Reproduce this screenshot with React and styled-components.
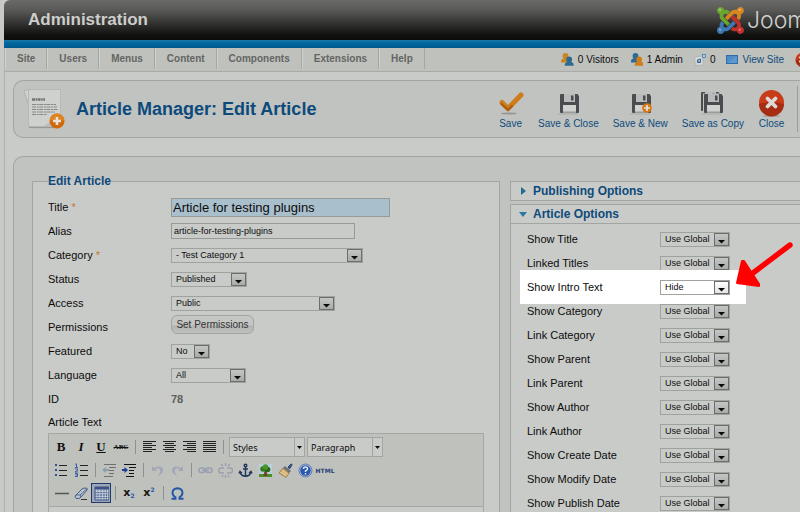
import React from "react";
import styled, { createGlobalStyle } from "styled-components";

const Global = createGlobalStyle`
  *, *::before, *::after { box-sizing: border-box; }
  html { scrollbar-width: none; background: #c8cac7; }
  body { margin: 0; font-family: "Liberation Sans", Arial, sans-serif; font-size: 11px; color: #0c0c0c; }
  button, input, select { font-family: inherit; color: inherit; margin: 0; }
`;

const line = "#a3a5a2";
const panel = "#c1c3c0";
const page = "#c9cbc8";
const navy = "#0d4a7c";

const Shell = styled.div`
  min-height: 100vh;
  margin-left: 4px;
  display: flex;
  flex-direction: column;
  overflow-x: clip;
`;

const Header = styled.header`
  height: 40px;
  flex: none;
  display: flex;
  align-items: center;
  justify-content: space-between;
  padding-left: 24px;
  border-top-left-radius: 6px;
  background: linear-gradient(#6a6a68, #595957 25%, #10100f 88%, #0c0c0c);
`;

const SiteName = styled.span`
  font-size: 17px;
  font-weight: bold;
  line-height: 20px;
  color: #cdcecb;
`;

const Brand = styled.a`
  display: flex;
  align-items: center;
  gap: 3px;
  width: 83px;
  overflow: hidden;
  color: #cfd0ce;
  text-decoration: none;
  font-family: Inter, "Liberation Sans", sans-serif;
  font-weight: 300;
  font-size: 23px;
  line-height: 28px;
  white-space: nowrap;
  svg { flex: none; }
`;

const Strip = styled.div`
  height: 8px;
  flex: none;
  background: linear-gradient(#1a7aa8, #0068a0 35%, #00588a);
`;

const Body = styled.div`
  flex: 1;
  display: flex;
  flex-direction: column;
  border-left: 1px solid #afb1ae;
  background: ${page};
`;

const NavBar = styled.div`
  height: 24px;
  flex: none;
  display: flex;
  justify-content: space-between;
  border-bottom: 1px solid #a9aba8;
  background: #bfc1bd;
`;

const Menu = styled.nav`
  display: flex;
  height: 21px;
`;

const MenuLink = styled.a`
  display: flex;
  align-items: center;
  padding: 0 11px;
  border-right: 1px solid #a5a7a4;
  border-left: 1px solid #cfd1ce;
  font-size: 10px;
  font-weight: bold;
  color: #646563;
  text-decoration: none;
`;

const Status = styled.div`
  display: flex;
  align-items: center;
  gap: 11px;
`;

const StatusItem = styled.span`
  display: flex;
  align-items: center;
  gap: 4px;
  font-size: 10px;
  white-space: nowrap;
`;

const StatusLink = styled(StatusItem).attrs({ as: "a", href: "#" })`
  color: ${navy};
  text-decoration: none;
`;

const Logout = styled.a`
  width: 5px;
  height: 14px;
  overflow: hidden;
`;

const TitleBar = styled.section`
  flex: none;
  display: flex;
  align-items: center;
  justify-content: space-between;
  height: 58px;
  margin: 8px 0 18px 8px;
  padding-left: 8px;
  border: 1px solid ${line};
  border-right: 0;
  border-radius: 10px 0 0 10px;
  background: ${panel};
`;

const Heading = styled.h1`
  display: flex;
  align-items: center;
  gap: 10px;
  margin: 0;
  font-size: 18px;
  line-height: 24px;
  color: ${navy};
  white-space: nowrap;
`;

const Actions = styled.div`
  display: flex;
  gap: 14px;
  height: 46px;
  padding-right: 12px;
  margin-right: 2px;
  border-right: 1px solid #9a9c99;
`;

const Action = styled.button`
  display: flex;
  flex-direction: column;
  align-items: center;
  gap: 1px;
  padding: 4px 0 0;
  border: 0;
  background: none;
  font-size: 10px;
  line-height: 12px;
  color: ${navy};
  white-space: nowrap;
`;

const Workspace = styled.main`
  flex: 1;
  display: grid;
  grid-template-columns: minmax(0, 468fr) minmax(0, 290fr);
  gap: 10px;
  margin-left: 8px;
  padding: 17px 0 0 18px;
  border: solid ${line};
  border-width: 1px 0 0 1px;
  border-top-left-radius: 10px;
  background: ${panel};
`;

const Fieldset = styled.fieldset`
  display: flex;
  flex-direction: column;
  min-width: 0;
  margin: 0;
  padding: 7px 15px 0;
  border: 1px solid ${line};
  border-bottom: 0;
  background: ${page};
`;

const Legend = styled.legend`
  padding: 0;
  font-size: 12px;
  font-weight: bold;
  line-height: 14px;
  color: ${navy};
`;

const Field = styled.div`
  display: grid;
  grid-template-columns: 123px minmax(0, 1fr);
  align-items: center;
  justify-items: start;
  height: 24px;
`;

const Label = styled.label`
  font-size: 11px;
  line-height: 14px;
`;

const Star = styled.span`
  color: #c67a35;
`;

const TextInput = styled.input`
  width: 184px;
  max-width: 100%;
  height: 16px;
  padding: 0 2px;
  border: 1px solid #989a97;
  border-radius: 0;
  background: transparent;
  font-size: 9px;
`;

const TitleInput = styled(TextInput)`
  width: 219px;
  height: 19px;
  padding: 0 1px;
  background: #a9bfcc;
  font-size: 13px;
`;

const SelectBox = styled.span`
  display: inline-grid;
  grid-template-columns: minmax(0, 1fr) 15px;
  width: ${(p) => p.$w}px;
  max-width: 100%;
  height: 15px;
  border: 1px solid #a0a29f;
  background: ${(p) => (p.$lit ? "#fff" : "transparent")};
  select {
    grid-area: 1 / 1 / 2 / 3;
    appearance: none;
    min-width: 0;
    height: 13px;
    padding: 0 0 0 4px;
    border: 0;
    background: none;
    font-size: 9px;
    line-height: 13px;
  }
  svg {
    grid-area: 1 / 2 / 2 / 3;
    width: 15px;
    height: 13px;
    pointer-events: none;
    border: 1px solid #6c6e6b;
    background: ${(p) => (p.$lit ? "linear-gradient(#fff, #e4e4e4)" : "linear-gradient(#c4c6c3, #a9aba8)")};
  }
`;

const PlainButton = styled.button`
  align-self: start;
  width: 83px;
  height: 19px;
  padding: 0;
  border: 1px solid #a2a4a1;
  border-radius: 6px;
  background: linear-gradient(#c5c7c4 50%, #b3b5b2 60%, #bfc1be);
  font-size: 10px;
  color: #333;
`;

const IdValue = styled.output`
  font-weight: bold;
  color: #5c5e5b;
`;

const TextLabel = styled(Label)`
  height: 22px;
  line-height: 22px;
`;

const Editor = styled.div`
  flex: 1;
  min-height: 78px;
  border: 1px solid #a6a8a4;
  border-bottom: 0;
`;

const Toolbars = styled.div`
  padding: 2px;
  border-bottom: 1px solid #a6a8a4;
  background: #bfc1bc;
`;

const ToolRow = styled.div`
  display: flex;
  align-items: center;
  height: 22px;
  & + & { margin-top: 1px; }
`;

const Tool = styled.button`
  flex: none;
  display: flex;
  align-items: center;
  justify-content: center;
  width: 20px;
  height: 20px;
  padding: 0;
  border: 1px solid ${(p) => (p["aria-pressed"] ? "#23386b" : "transparent")};
  background: ${(p) => (p["aria-pressed"] ? "#9aa5b8" : "none")};
`;

const Glyph = styled.span`
  font-family: "Liberation Serif", serif;
  font-size: ${(p) => p.$size || 13}px;
  font-weight: bold;
  font-style: ${(p) => (p.$italic ? "italic" : "normal")};
  text-decoration: ${(p) => p.$deco || "none"};
  color: #111;
`;

const HtmlGlyph = styled.span`
  font-family: "DejaVu Sans", sans-serif;
  font-size: 6px;
  font-weight: bold;
  color: #1e3f74;
`;

const Sep = styled.span`
  flex: none;
  width: 1px;
  height: 14px;
  margin: 0 3px 0 4px;
  background: #8f918e;
`;

const EditorSelect = styled.span`
  flex: none;
  display: inline-grid;
  grid-template-columns: 1fr 10px;
  width: 76px;
  height: 20px;
  margin-left: 2px;
  border: 1px solid #a3a5a2;
  background: #c9cbc8;
  select {
    grid-area: 1 / 1 / 2 / 3;
    appearance: none;
    min-width: 0;
    padding: 0 0 0 3px;
    border: 0;
    background: none;
    font-family: "Noto Sans", "DejaVu Sans", sans-serif;
    font-size: 9px;
  }
  svg {
    grid-area: 1 / 2 / 2 / 3;
    width: 10px;
    height: 18px;
    border-left: 1px solid #a3a5a2;
    pointer-events: none;
  }
`;

const Sliders = styled.div`
  display: flex;
  flex-direction: column;
  gap: 3px;
  margin-top: 7px;
`;

const Slider = styled.section`
  flex: ${(p) => (p.$open ? 1 : "none")};
  border: 1px solid ${line};
  border-width: ${(p) => (p.$open ? "1px 0 0 1px" : "1px 0 1px 1px")};
  background: ${page};
`;

const SliderTitle = styled.h3`
  margin: 0;
  border-bottom: ${(p) => (p.$open ? `1px solid ${line}` : "0")};
`;

const SliderToggle = styled.button`
  display: flex;
  align-items: center;
  gap: 6px;
  width: 100%;
  height: 18px;
  padding: 0 0 0 8px;
  border: 0;
  background: none;
  font-size: 12px;
  font-weight: bold;
  color: ${navy};
`;

const Options = styled.div`
  padding: 3px 0 0 9px;
`;

const OptionRow = styled.div`
  position: relative;
  display: grid;
  grid-template-columns: 133px minmax(0, 1fr);
  align-items: center;
  max-width: 226px;
  height: ${(p) => (p.$lit ? 34 : 24)}px;
  margin: ${(p) => (p.$lit ? "-5px 0" : "0")};
  padding-left: 7px;
  background: ${(p) => (p.$lit ? "#fff" : "none")};
`;

const Pointer = styled.svg`
  position: absolute;
  left: 215px;
  top: -28px;
  z-index: 1;
`;

function JoomlaMark() {
  return (
    <svg width="27" height="31" viewBox="0 0 448 512" aria-hidden="true">
      <path fill="#6aa52c" d="M.6 92.1C.6 58.8 27.4 32 60.4 32c30 0 54.5 21.9 59.2 50.2 32.6-7.6 67.1.6 96.5 30l-44.3 44.3c-20.5-20.5-42.6-16.3-55.4-3.5-14.3 14.3-14.3 37.9 0 52.2l99.5 99.5-44 44.3c-87.7-87.2-49.7-49.7-99.8-99.7-26.8-26.5-35-64.8-24.8-98.9C20.4 144.6.6 120.7.6 92.1z" />
      <path fill="#d78620" d="M130.1 208.5l44.3 44.3c10-10 89.7-89.7 99.7-99.8 14.3-14.3 37.6-14.3 51.9 0 12.8 12.8 17 35-3.5 55.4l44 44.3c31.2-31.2 38.5-67.6 28.9-101.2 29.2-4.1 51.9-29.2 51.9-59.5 0-33.2-26.8-60.1-59.8-60.1-30.3 0-55.4 22.5-59.5 51.6-33.8-9.9-71.7-1.5-98.3 25.1-18.3 19.1-71.1 71.5-99.6 99.9z" />
      <path fill="#c4312d" d="M396.4 360.7c8.2-32.7-.9-68.5-26.3-93.9-11.8-12.2 5 4.7-99.5-99.7l-44.3 44.3 99.7 99.7c14.3 14.3 14.3 37.6 0 51.9-12.8 12.8-35 17-55.4-3.5l-44 44.3c27.6 30.2 68 38.8 102.7 28 5.5 27.4 29.7 48.1 58.9 48.1 33 0 59.8-26.8 59.8-60.1 0-30.2-22.5-55-51.6-59.1z" />
      <path fill="#3f79b5" d="M312.1 307.6l-44-44.3c-87 86.4-50.4 50.4-99.7 99.8-14.3 14.3-37.6 14.3-51.9 0-13.1-13.4-16.9-35.3 3.2-55.4l-44-44.3c-30.2 30.2-38 65.2-29.5 98.3-26.7 6-46.2 29.9-46.2 58.2C0 453.2 26.8 480 59.8 480c28.6 0 52.5-19.8 58.6-46.7 32.7 8.2 68.5-.6 94.2-26 32.1-32 12.2-12.4 99.5-99.7z" />
      <g fill="#fff" opacity=".35">
        <circle cx="50" cy="78" r="22" /><circle cx="378" cy="78" r="22" />
        <circle cx="50" cy="408" r="20" /><circle cx="378" cy="408" r="20" />
      </g>
    </svg>
  );
}

function People({ back, front, flip }) {
  return (
    <svg width="13" height="13" viewBox="0 0 13 13" aria-hidden="true">
      <g transform={flip ? "translate(1 0)" : undefined}>
        <path d="M0 9.500C-.2 6.500 1 5.300 4.300 5.300s4.500 1 4.500 4.200z" fill={back} />
        <circle cx="4.500" cy="3" r="2.900" fill={back} />
        <path d="M3.700 12.700C3.500 9.700 5 8.700 8.200 8.700s4.700 1 4.500 4z" fill={front} />
        <circle cx="8.200" cy="6.500" r="2.900" fill={front} />
      </g>
    </svg>
  );
}

function MailIcon() {
  return (
    <svg width="12" height="12" viewBox="0 0 12 12" aria-hidden="true">
      <path d="M.5 3l8-1 1 9-8 .5z" fill="#d3d6d8" stroke="#a8adb0" strokeWidth=".7" />
      <path d="M3.500 8.500V6l3-1v3.500zM3.500 6.500l2 1" fill="none" stroke="#35668f" />
      <rect x="8.500" y=".5" width="3" height="3" fill="#b4cbe0" stroke="#4b7eae" strokeWidth=".8" />
    </svg>
  );
}

function ScreenIcon() {
  return (
    <svg width="12" height="9" viewBox="0 0 12 9" aria-hidden="true">
      <rect x=".5" y=".5" width="11" height="8" fill="#4d8bc9" stroke="#2f6ba6" />
      <path d="M1 8L11 1v7z" fill="#5f98d0" />
    </svg>
  );
}

function ArticleIcon() {
  return (
    <svg width="44" height="44" viewBox="0 0 44 44" aria-hidden="true">
      <path d="M2 4l6-2v20z" fill="#d0d2cf" stroke="#a5a7a4" strokeWidth=".7" />
      <rect x="6.500" y="2.500" width="32" height="37" fill="#cfd1ce" stroke="#b7b9b6" />
      <path d="M7 40h31L38 28 22 39z" fill="#bbbdba" />
      <path d="M10 12.500h13" stroke="#737572" strokeWidth="2.400" strokeDasharray="3 .6 1.500 .5" />
      <path d="M10 17.500h24M10 20h25M10 22.500h26M10 25h23M10 27.500h15" stroke="#868885" strokeWidth="1" strokeDasharray="4 .7 2 .5" />
      <path d="M7 40.500h30" stroke="#979996" strokeWidth="1.200" />
      <circle cx="35" cy="34" r="7.500" fill="#d06a0c" />
      <path d="M27.500 34a7.500 7.500 0 0 1 15 0q-7-3-15 0z" fill="#dc8420" />
      <path d="M35 30v8M31 34h8" stroke="#e6e3dd" strokeWidth="2.600" />
    </svg>
  );
}

function SaveTick() {
  return (
    <svg width="27" height="27" viewBox="0 0 27 27" aria-hidden="true">
      <ellipse cx="12" cy="23.500" rx="8" ry="1" fill="#969895" />
      <path d="M5 12.500l6 6L24 5" fill="none" stroke="#cf7c1c" strokeWidth="5" strokeLinecap="round" strokeLinejoin="round" />
      <path d="M4.500 14l6.500 6 4-4" fill="none" stroke="#a85d12" strokeWidth="2.200" strokeLinecap="round" />
    </svg>
  );
}

function Disk() {
  return (
    <>
      <path d="M0 1q0-1 1-1h16.500L19 2v16q0 1-1 1H1q-1 0-1-1z" fill="#4b4c50" />
      <path d="M4 0h11v8H4z" fill="#b9bbbb" />
      <path d="M11 1.500h2.500v5H11z" fill="#4b4c50" />
      <path d="M3 11h13v8H3z" fill="#d0d2d0" />
      <path d="M3 17.500h13V19H3z" fill="#999b9a" />
    </>
  );
}

function DiskIcon({ plus, copy }) {
  return (
    <svg width="27" height="27" viewBox="0 0 27 27" aria-hidden="true">
      <path d="M3 24h20" stroke="#a7a9a6" />
      {copy && <g transform="translate(2 2)"><Disk /></g>}
      {copy && <path d="M4 3.500h20v19H4z" fill="#c1c3c0" />}
      <g transform="translate(5 4)"><Disk /></g>
      {plus && <circle cx="20" cy="18" r="4.800" fill="#d47714" />}
      {plus && <path d="M20 15v6M17 18h6" stroke="#e6e3dd" strokeWidth="1.700" />}
    </svg>
  );
}

function CloseIcon({ size = 27 }) {
  return (
    <svg width={size} height={size} viewBox="0 0 27 27" aria-hidden="true">
      <ellipse cx="13.500" cy="26" rx="9" ry="1" fill="#a2a4a1" />
      <circle cx="13.500" cy="12.500" r="12.500" fill="#c93c1a" />
      <path d="M1 14a12.500 12.500 0 0 0 25 0q-12-4-25 0z" fill="#a62d14" />
      <path d="M9.500 8.500l8 8m0-8l-8 8" stroke="#dcdad6" strokeWidth="3.800" strokeLinecap="round" />
    </svg>
  );
}

function Lines({ rows, color = "#222" }) {
  return <path d={rows.map(([x, y, w]) => `M${x} ${y}.5h${w}`).join("")} stroke={color} fill="none" />;
}

const alignRows = {
  left: [[1, 1, 13], [1, 3, 9], [1, 5, 13], [1, 7, 9], [1, 9, 13], [1, 11, 9]],
  center: [[1, 1, 13], [3, 3, 9], [1, 5, 13], [3, 7, 9], [1, 9, 13], [3, 11, 9]],
  right: [[1, 1, 13], [5, 3, 9], [1, 5, 13], [5, 7, 9], [1, 9, 13], [5, 11, 9]],
  full: [[1, 1, 13], [1, 3, 13], [1, 5, 13], [1, 7, 13], [1, 9, 13], [1, 11, 13]],
};

const drawings = {
  ...Object.fromEntries(Object.entries(alignRows).map(([k, rows]) => [k, <Lines rows={rows} />])),
  bullets: (
    <>
      <Lines rows={[[5, 2, 8], [5, 7, 8], [5, 12, 8]]} />
      <path d="M1 1h2v2H1zM1 6h2v2H1zM1 11h2v2H1z" fill="#2b55a0" />
    </>
  ),
  numbers: (
    <>
      <Lines rows={[[6, 2, 8], [6, 7, 8], [6, 12, 8]]} />
      <path d="M1 1h1.500v3M1 4.500h3M1 6h2.500v1.500L1 9h3M1 10.500h2.500v3H1M1.500 12h2" fill="none" stroke="#2b55a0" strokeWidth=".9" />
    </>
  ),
  outdent: (
    <g opacity=".5">
      <Lines rows={[[2, 1, 12], [7, 4, 7], [7, 7, 5], [7, 10, 5], [2, 13, 9]]} />
      <path d="M0 7l4-3v2h3v2H4v2z" fill="#5f79a4" />
    </g>
  ),
  indent: (
    <>
      <Lines rows={[[2, 1, 12], [7, 4, 7], [7, 7, 5], [7, 10, 5], [4, 13, 8]]} color="#111" />
      <path d="M6 7L2.500 4v2H0v2h2.500v2z" fill="#173f96" />
    </>
  ),
  undo: <path d="M2 3v5h5L5.500 6.500Q9 4 10 7T7 13Q14 11 13 6 11 1 4 5z" fill="#a2a8b8" />,
  redo: <path d="M13 3v5H8l1.500-1.500Q6 4 5 7t3 6Q1 11 2 6 4 1 11 5z" fill="#a2a8b8" />,
  link: (
    <g fill="none" stroke="#999faf" strokeWidth="1.500">
      <rect x="1" y="5" width="6" height="4.500" rx="2" /><rect x="8" y="5" width="6" height="4.500" rx="2" /><path d="M4 7.500h7" />
    </g>
  ),
  unlink: (
    <g fill="none" stroke="#999faf" strokeWidth="1.400">
      <path d="M6 5H3a2 2 0 0 0 0 5h3M9 5h3a2 2 0 0 1 0 5H9M7.500 0v3M3 1l2 2M12 1l-2 2M7.500 12v3M4 14l1-2M11 14l-1-2" />
    </g>
  ),
  anchor: (
    <g fill="none" stroke="#22395e" strokeWidth="1.500">
      <circle cx="7.500" cy="2.500" r="1.300" /><path d="M7.500 4v9M5 6h5M2 9q1 4 5.500 4.200Q12 13 13 9M1 10.500l1-2 2 1.500M11 10l2-1.500 1 2" />
    </g>
  ),
  image: (
    <>
      <path d="M1 1h13v13H1z" fill="#b8d0de" /><path d="M1 11h13v3H1z" fill="#4c8c2d" />
      <path d="M6.500 8h2l1 5h-4z" fill="#70431f" />
      <circle cx="5" cy="6" r="2.800" fill="#347a20" /><circle cx="9.500" cy="6.500" r="2.800" fill="#28671b" /><circle cx="7.500" cy="4" r="2.800" fill="#4a962d" />
    </>
  ),
  brush: (
    <>
      <path d="M10 4l3-3q1-.5 1 1l-2.500 4z" fill="#3c5a90" stroke="#2c4474" />
      <path d="M7 3l6 5-2 2-6-5z" fill="#6c727b" /><path d="M5 5l6 5-3 4.500L1 10z" fill="#d3b071" stroke="#8d6a35" strokeWidth=".7" />
      <path d="M3 9l5 4M4.500 7.500l5 4" stroke="#f0dcae" strokeWidth=".8" />
    </>
  ),
  help: (
    <>
      <circle cx="7.500" cy="7.500" r="6.500" fill="#a9bcda" /><circle cx="7.500" cy="7.500" r="5.200" fill="#2a58ae" />
      <circle cx="7.500" cy="7.500" r="6.500" fill="none" stroke="#4e6ea8" strokeWidth=".8" />
      <path d="M5.500 6q0-2 2-2t2 1.800Q9.500 7 7.500 8v1M7.500 10v1.500" fill="none" stroke="#e2e6ee" strokeWidth="1.500" />
    </>
  ),
  rule: <path d="M1 7.500h14" stroke="#555" strokeWidth="1.500" />,
  eraser: (
    <>
      <path d="M2 9l6-6q1-1 2.500-.8h2Q14 2.500 13 4l-6 7q-1 1.500-2.500 1.500H3Q0 12 2 9z" fill="#b8c4d4" stroke="#3f587d" />
      <path d="M2 9h4q1.500 1 .5 2.500M6 9l7-6.500" stroke="#3f587d" fill="none" strokeWidth=".8" /><path d="M7 13.500h6" stroke="#333" />
    </>
  ),
  table: (
    <>
      <path d="M1 1h14v13H1z" fill="#c5cedd" /><path d="M1 1h14v2.500H1z" fill="#3d5282" />
      <path d="M1 6.500h14M1 9h14M1 11.500h14M4 3v11M7 3v11M10 3v11M12.500 3v11" stroke="#4a5f8e" strokeWidth=".8" strokeDasharray="2 .6" />
      <path d="M1 1h14v13H1z" fill="none" stroke="#3d5282" />
    </>
  ),
  omega: <path d="M1.500 12.800h4v-1.500Q2.500 9.500 2.500 6.500 2.800 2.500 7.500 2.300q4.700.2 5 4.200 0 3-3 4.800v1.500h4" fill="none" stroke="#2455a6" strokeWidth="1.900" />,
};

function ToolIcon({ name, label, pressed }) {
  return (
    <Tool type="button" aria-label={label} aria-pressed={pressed}>
      <svg width="15" height="15" viewBox="0 0 15 15" aria-hidden="true">{drawings[name]}</svg>
    </Tool>
  );
}

const ScriptGlyph = styled.span`
  display: flex;
  align-items: ${(p) => (p.$low ? "flex-end" : "flex-start")};
  font-family: "DejaVu Sans", sans-serif;
  font-size: 11px;
  font-weight: bold;
  line-height: 12px;
  color: #151515;
  small { font-size: 6px; line-height: 6px; color: #2455a6; }
`;

function Select({ id, value, w, lit, label }) {
  return (
    <SelectBox $w={w} $lit={lit}>
      <select id={id} defaultValue={value} aria-label={label}>
        <option>{value}</option>
      </select>
      <svg viewBox="0 0 13 11" aria-hidden="true"><path d="M3 6h7L6.500 9.500z" fill="#080808" /></svg>
    </SelectBox>
  );
}

function ToolSelect({ value, label }) {
  return (
    <EditorSelect>
      <select defaultValue={value} aria-label={label}><option>{value}</option></select>
      <svg viewBox="0 0 9 18" aria-hidden="true"><path d="M2 8h5L4.500 11z" fill="#080808" /></svg>
    </EditorSelect>
  );
}

const menus = ["Site", "Users", "Menus", "Content", "Components", "Extensions", "Help"];

const actions = [
  ["Save", <SaveTick />],
  ["Save & Close", <DiskIcon />],
  ["Save & New", <DiskIcon plus />],
  ["Save as Copy", <DiskIcon copy />],
  ["Close", <CloseIcon />],
];

const options = [
  "Show Title", "Linked Titles", "Show Intro Text", "Show Category", "Link Category", "Show Parent",
  "Link Parent", "Show Author", "Link Author", "Show Create Date", "Show Modify Date", "Show Publish Date",
];

function Choice({ id, label, value, w, required }) {
  return (
    <Field>
      <Label htmlFor={id}>{label}{required && <Star> *</Star>}</Label>
      <Select id={id} value={value} w={w} />
    </Field>
  );
}

export default function App() {
  return (
    <>
      <Global />
      <Shell>
        <Header>
          <SiteName>Administration</SiteName>
          <Brand href="#"><JoomlaMark />Joomla!</Brand>
        </Header>
        <Strip />
        <Body>
          <NavBar>
            <Menu>{menus.map((m) => <MenuLink href="#" key={m}>{m}</MenuLink>)}</Menu>
            <Status>
              <StatusItem><People back="#c98424" front="#2d6a92" />0 Visitors</StatusItem>
              <StatusItem><People back="#2d6a92" front="#d17c16" flip />1 Admin</StatusItem>
              <StatusItem><MailIcon />0</StatusItem>
              <StatusLink><ScreenIcon />View Site</StatusLink>
              <Logout href="#" aria-label="Log out"><CloseIcon size={14} /></Logout>
            </Status>
          </NavBar>

          <TitleBar>
            <Heading><ArticleIcon />Article Manager: Edit Article</Heading>
            <Actions>
              {actions.map(([label, icon]) => (
                <Action type="button" key={label}>{icon}{label}</Action>
              ))}
            </Actions>
          </TitleBar>

          <Workspace>
            <Fieldset>
              <Legend>Edit Article</Legend>
              <Field>
                <Label htmlFor="title">Title<Star> *</Star></Label>
                <TitleInput id="title" defaultValue="Article for testing plugins" />
              </Field>
              <Field>
                <Label htmlFor="alias">Alias</Label>
                <TextInput id="alias" defaultValue="article-for-testing-plugins" />
              </Field>
              <Choice id="category" label="Category" value="- Test Category 1" w={192} required />
              <Choice id="status" label="Status" value="Published" w={76} />
              <Choice id="access" label="Access" value="Public" w={164} />
              <Field>
                <Label htmlFor="permissions">Permissions</Label>
                <PlainButton id="permissions" type="button">Set Permissions</PlainButton>
              </Field>
              <Choice id="featured" label="Featured" value="No" w={39} />
              <Choice id="language" label="Language" value="All" w={75} />
              <Field>
                <Label htmlFor="article-id">ID</Label>
                <IdValue id="article-id">78</IdValue>
              </Field>
              <TextLabel as="div">Article Text</TextLabel>
              <Editor>
                <Toolbars>
                  <ToolRow>
                    <Tool type="button" aria-label="Bold"><Glyph>B</Glyph></Tool>
                    <Tool type="button" aria-label="Italic"><Glyph $italic>I</Glyph></Tool>
                    <Tool type="button" aria-label="Underline"><Glyph $deco="underline">U</Glyph></Tool>
                    <Tool type="button" aria-label="Strikethrough"><Glyph $size={7} $deco="line-through">ABC</Glyph></Tool>
                    <Sep />
                    <ToolIcon name="left" label="Align left" />
                    <ToolIcon name="center" label="Align center" />
                    <ToolIcon name="right" label="Align right" />
                    <ToolIcon name="full" label="Align full" />
                    <Sep />
                    <ToolSelect value="Styles" label="Styles" />
                    <ToolSelect value="Paragraph" label="Format" />
                  </ToolRow>
                  <ToolRow>
                    <ToolIcon name="bullets" label="Unordered list" />
                    <ToolIcon name="numbers" label="Ordered list" />
                    <Sep />
                    <ToolIcon name="outdent" label="Outdent" />
                    <ToolIcon name="indent" label="Indent" />
                    <Sep />
                    <ToolIcon name="undo" label="Undo" />
                    <ToolIcon name="redo" label="Redo" />
                    <Sep />
                    <ToolIcon name="link" label="Insert link" />
                    <ToolIcon name="unlink" label="Unlink" />
                    <ToolIcon name="anchor" label="Insert anchor" />
                    <ToolIcon name="image" label="Insert image" />
                    <ToolIcon name="brush" label="Clean up code" />
                    <ToolIcon name="help" label="Help" />
                    <Tool type="button" aria-label="Edit HTML source"><HtmlGlyph>HTML</HtmlGlyph></Tool>
                  </ToolRow>
                  <ToolRow>
                    <ToolIcon name="rule" label="Horizontal rule" />
                    <ToolIcon name="eraser" label="Remove formatting" />
                    <ToolIcon name="table" label="Toggle guidelines" pressed />
                    <Sep />
                    <Tool type="button" aria-label="Subscript"><ScriptGlyph $low>x<small>2</small></ScriptGlyph></Tool>
                    <Tool type="button" aria-label="Superscript"><ScriptGlyph>x<small>2</small></ScriptGlyph></Tool>
                    <Sep />
                    <ToolIcon name="omega" label="Special character" />
                  </ToolRow>
                </Toolbars>
              </Editor>
            </Fieldset>

            <Sliders>
              <Slider>
                <SliderTitle>
                  <SliderToggle type="button" aria-expanded="false">
                    <svg width="8" height="8" viewBox="0 0 8 8" aria-hidden="true"><path d="M2 0l5 4-5 4z" fill="#1f6b91" /></svg>
                    Publishing Options
                  </SliderToggle>
                </SliderTitle>
              </Slider>
              <Slider $open>
                <SliderTitle $open>
                  <SliderToggle type="button" aria-expanded="true">
                    <svg width="8" height="8" viewBox="0 0 8 8" aria-hidden="true"><path d="M0 2h8L4 7z" fill="#2679a2" /></svg>
                    Article Options
                  </SliderToggle>
                </SliderTitle>
                <Options>
                  {options.map((name) => {
                    const lit = name === "Show Intro Text";
                    const id = name.toLowerCase().replaceAll(" ", "-");
                    return (
                      <OptionRow key={name} $lit={lit}>
                        <Label htmlFor={id}>{name}</Label>
                        <Select id={id} value={lit ? "Hide" : "Use Global"} w={70} lit={lit} />
                        {lit && (
                          <Pointer width="60" height="50" viewBox="0 0 60 50" aria-hidden="true">
                            <path d="M55 3L18 31" stroke="#fe0000" strokeWidth="5.400" strokeLinecap="round" />
                            <path d="M2 41L7 19h2L24 42v2z" fill="#fe0000" stroke="#fe0000" strokeWidth="2" strokeLinejoin="round" />
                          </Pointer>
                        )}
                      </OptionRow>
                    );
                  })}
                </Options>
              </Slider>
            </Sliders>
          </Workspace>
        </Body>
      </Shell>
    </>
  );
}
